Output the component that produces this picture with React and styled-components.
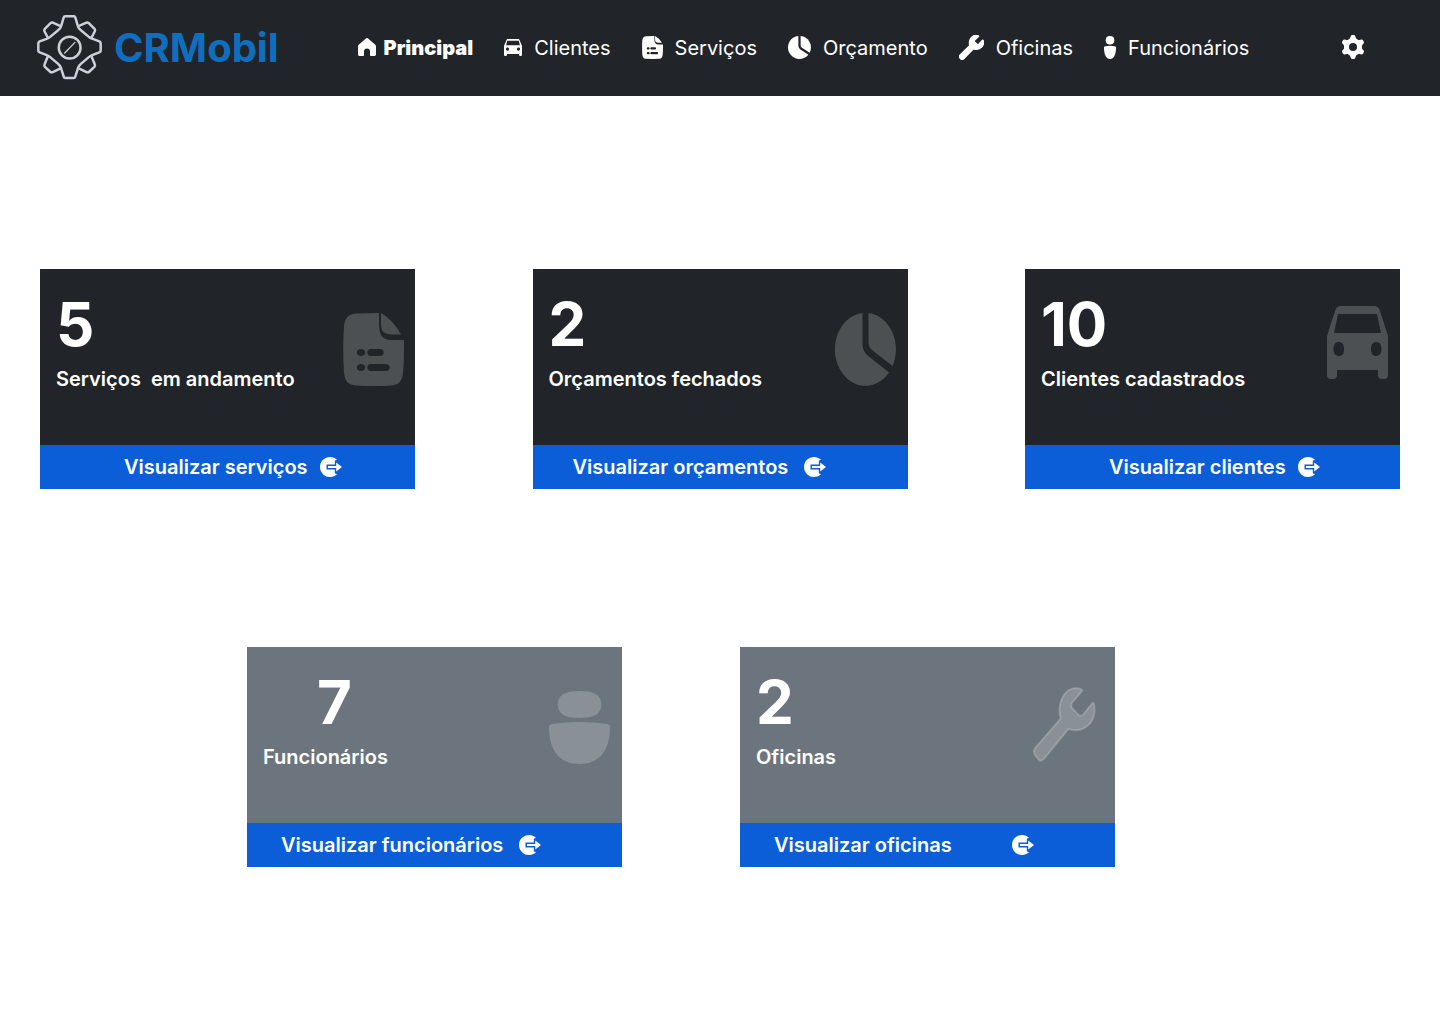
import React from "react";
import styled, { createGlobalStyle } from "styled-components";

const GlobalStyle = createGlobalStyle`
  *, *::before, *::after { box-sizing: border-box; }
  body {
    margin: 0;
    background: #ffffff;
    font-family: Inter, "Liberation Sans", sans-serif;
  }
`;

/* ---------- Icons ---------- */

const Glyph = styled.svg`
  display: block;
  flex: none;
  width: ${(p) => p.$w}px;
  height: ${(p) => p.$h}px;
  fill: currentColor;
`;

function Icon({ w, h, box, children }) {
  return (
    <Glyph $w={w} $h={h} viewBox={box} preserveAspectRatio="none" aria-hidden="true">
      {children}
    </Glyph>
  );
}

const HomeIcon = ({ w, h }) => (
  <Icon w={w} h={h} box="0 0 18 18">
    <path d="M7.9.5a1.7 1.7 0 0 1 2.2 0l7.2 6.2c.4.4.7.9.7 1.5v8.3c0 .8-.7 1.5-1.5 1.5H13c-.6 0-1-.4-1-1v-3.500a3 3 0 0 0-6 0V17c0 .6-.4 1-1 1H1.500C.7 18 0 17.300 0 16.500V8.200c0-.6.3-1.100.7-1.500z" />
  </Icon>
);

const CarIcon = ({ w, h }) => (
  <Icon w={w} h={h} box="0 0 61 73">
    <path
      fillRule="evenodd"
      d="M8 5C9 1.500 11 0 14 0H47C50 0 52 1.500 53 5L61 30V69Q61 73 57 73H55Q51 73 51 69V64H10V69Q10 73 6 73H4Q0 73 0 69V30ZM11 8L7 27H54L50 8ZM12 36C8.500 36 6.500 38 6.500 43S8.500 50 12 50S17 48 17 43S15 36 12 36ZM49 36C46 36 44 38 44 43S46 50 49 50S54.500 48 54.500 43S52.500 36 49 36Z"
    />
  </Icon>
);

const DocumentIcon = ({ w, h }) => (
  <Icon w={w} h={h} box="0 0 61 73">
    <path
      fillRule="evenodd"
      d="M36 0V12C36 22 40 27 48 27H61C61 41 61 52 60 60C59 69 55 72 48 72.500Q30 73.500 13 72.500C6 72 2 69 1 60Q-.5 36 1 13C2 4 6 1 13 .5Q24 0 36 0ZM18 36C12.500 36 12.500 43 18 43S23.500 36 18 36ZM28 36C23 36 23 43 28 43H37C42 43 42 36 37 36ZM18 51C12.500 51 12.500 58 18 58S23.500 51 18 51ZM28 51C23 51 23 58 28 58H43C48 58 48 51 43 51Z"
    />
    <path d="M38 0Q50 7 58 21.500H49C41 21.500 38 18 38 11Z" />
  </Icon>
);

const PieIcon = ({ w, h }) => (
  <Icon w={w} h={h} box="0 0 61 73">
    <path d="M27.500 0V32Q28 38 32 42L54 59.500A30.500 36.500 0 1 1 27.500 0Z" />
    <path d="M33.500 0V30Q33.500 34 37 37L57.500 53A30.500 36.500 0 0 0 33.500 0Z" />
  </Icon>
);

const WrenchIcon = ({ w, h, outline = 2 }) => (
  <Icon w={w} h={h} box="0 0 64 76">
    <path
      stroke="currentColor"
      strokeWidth={outline}
      strokeLinejoin="round"
      d="M50 4Q50 1.500 43 1C32 2 24 15 28 32L2 62Q0 65 2 69L6 74Q8 76 11 73L36 42.500C46 46 60 42 62.500 26Q63 16 60.500 16L51 28Q49 30 46.500 28.500L39.500 21Q38 18 40 15.500Z"
    />
  </Icon>
);

const PersonIcon = ({ w, h }) => (
  <Icon w={w} h={h} box="0 0 61 73">
    <path d="M30.500 0C45 0 52.300 4 52.300 13.500S45 27 30.500 27S8.700 23 8.700 13.500S16 0 30.500 0Z" />
    <path d="M3 33Q30.500 29 58 33Q61 33.500 61 36C61 60 50 73 30.500 73S0 60 0 36Q0 33.500 3 33Z" />
  </Icon>
);

const SettingsIcon = ({ w, h }) => (
  <Icon w={w} h={h} box="0 0 24 24">
    <circle cx="12" cy="12" r="6.500" fill="none" stroke="currentColor" strokeWidth="5" />
    {[0, 60, 120, 180, 240, 300].map((angle) => (
      <path
        key={angle}
        transform={`rotate(${angle} 12 12)`}
        d="M6.800 5.500Q9 4.500 9.500 2L9.800 1Q10.200 0 11.200 0H12.800Q13.800 0 14.200 1L14.500 2Q15 4.500 17.200 5.500L15 7H9Z"
      />
    ))}
  </Icon>
);

const ArrowCircleIcon = () => (
  <Icon w={22} h={20} box="0 0 22 20">
    <path d="M18 4A10 10 0 1 0 18 16L15.500 15V5Z" />
    <path
      stroke="#0b5ed7"
      strokeWidth="1.400"
      d="M7.200 8.200H15.500V4L20 3L23 10L20 17L15.500 16V11.800H7.200Z"
      fill="#0b5ed7"
    />
    <path d="M8 9H16.200V5.500L22 10L16.200 14.500V11H8Z" />
  </Icon>
);

const LogoMark = () => (
  <Icon w={65} h={65} box="50 46 197 197">
    <g fill="none" stroke="#cdd0d8" strokeWidth="7.500" strokeLinejoin="round" strokeLinecap="round">
      <path d="M135 50H162Q165 50 166 53L174 80Q176 88 183 92L208 113Q214 117 221 119L239 126Q243 128 243 132V154Q243 158 239 159L219 167Q213 169 208 173L182 195Q177 199 175 205L166 233Q165 237 161 237H136Q132 237 131 233L122 205Q120 199 115 195L89 173Q84 169 78 167L58 159Q54 158 54 154V132Q54 128 58 126L77 119Q84 117 89 113L114 92Q121 88 123 80L131 53Q132 50 135 50Z" />
      <path d="M118 78L98 69Q94 68 91 71L73 89Q71 92 73 96L83 115" />
      <path d="M179 78L200 69Q204 68 207 71L225 89Q227 92 225 96L215 115" />
      <path d="M83 171L73 195Q71 200 74 203L90 218Q93 221 98 219L118 209" />
      <path d="M215 171L225 195Q227 200 224 203L208 218Q205 221 200 219L180 209" />
      <circle cx="149" cy="145" r="33" />
      <path strokeWidth="4" d="M134 161L165 129" />
    </g>
  </Icon>
);

/* ---------- Header ---------- */

const Header = styled.header`
  display: flex;
  align-items: center;
  height: 96px;
  padding: 0 75px 0 37px;
  background: #212529;
  color: #ffffff;
`;

const Brand = styled.a`
  display: flex;
  align-items: center;
  gap: 12px;
  color: #106ebe;
  font-size: 40px;
  line-height: 48px;
  font-weight: 700;
  text-decoration: none;

  svg {
    margin-bottom: 2px;
  }
`;

const Nav = styled.nav`
  display: flex;
  align-items: center;
  gap: 31px;
  margin-left: 79px;
`;

const NavLink = styled.a`
  display: flex;
  align-items: center;
  gap: ${(p) => (p.$active ? 8 : 12)}px;
  color: inherit;
  font-size: 20px;
  line-height: 24px;
  font-weight: ${(p) => (p.$active ? 900 : 400)};
  text-decoration: none;

  svg {
    margin-bottom: 2px;
  }
`;

const SettingsButton = styled.button`
  margin: 0 0 0 auto;
  padding: 0 0 2px;
  border: 0;
  background: none;
  color: inherit;
  cursor: pointer;
`;

/* ---------- Cards ---------- */

const Dashboard = styled.main`
  display: flex;
  flex-direction: column;
  gap: 158px;
  padding: 173px 40px;
`;

const CardRow = styled.div`
  display: flex;
  justify-content: space-between;
`;

const CenteredRow = styled(CardRow)`
  justify-content: center;
  gap: 118px;
  padding-right: 78px;
`;

const Card = styled.article`
  width: 375px;
  color: #ffffff;
  background: ${(p) => (p.$muted ? "#6c757d" : "#212529")};
`;

const CardBody = styled.div`
  display: flex;
  justify-content: space-between;
  align-items: flex-start;
  height: 176px;
  padding: 20px ${(p) => p.$edge}px 0 16px;
`;

const Count = styled.p`
  margin: 0 0 8px ${(p) => p.$indent}px;
  font-size: 60px;
  line-height: 70px;
  font-weight: 700;
  font-kerning: none;
`;

const Label = styled.h2`
  margin: 0;
  font-size: 20px;
  line-height: 24px;
  font-weight: 600;
  white-space: pre;
`;

const CardIcon = styled.div`
  padding-top: ${(p) => p.$drop}px;
  color: rgba(255, 255, 255, 0.2);
`;

const CardLink = styled.a`
  display: flex;
  align-items: center;
  gap: ${(p) => p.$gap}px;
  height: 44px;
  padding-left: ${(p) => p.$inset}px;
  background: #0b5ed7;
  color: inherit;
  font-size: 20px;
  line-height: 24px;
  font-weight: 600;
  text-decoration: none;
`;

function SummaryCard({
  count, label, action, icon, muted, indent = 0, drop = 24, edge = 12, inset, gap = 12,
}) {
  return (
    <Card $muted={muted}>
      <CardBody $edge={edge}>
        <div>
          <Count $indent={indent}>{count}</Count>
          <Label>{label}</Label>
        </div>
        <CardIcon $drop={drop}>{icon}</CardIcon>
      </CardBody>
      <CardLink href="#" $inset={inset} $gap={gap}>
        {action}
        <ArrowCircleIcon />
      </CardLink>
    </Card>
  );
}

const navItems = [
  { text: "Principal", icon: <HomeIcon w={18} h={18} />, active: true },
  { text: "Clientes", icon: <CarIcon w={18} h={17} /> },
  { text: "Serviços", icon: <DocumentIcon w={21} h={23} /> },
  { text: "Orçamento", icon: <PieIcon w={23} h={23} /> },
  { text: "Oficinas", icon: <WrenchIcon w={25} h={25} outline={4} /> },
  { text: "Funcionários", icon: <PersonIcon w={12} h={23} /> },
];

export default function App() {
  return (
    <>
      <GlobalStyle />
      <Header>
        <Brand href="#">
          <LogoMark />
          CRMobil
        </Brand>
        <Nav>
          {navItems.map(({ text, icon, active }) => (
            <NavLink key={text} href="#" $active={active}>
              {icon}
              {text}
            </NavLink>
          ))}
        </Nav>
        <SettingsButton type="button" aria-label="Configurações">
          <SettingsIcon w={24} h={24} />
        </SettingsButton>
      </Header>
      <Dashboard>
        <CardRow>
          <SummaryCard
            count="5"
            label="Serviços  em andamento"
            action="Visualizar serviços"
            icon={<DocumentIcon w={61} h={73} />}
            edge={11}
            inset={84}
          />
          <SummaryCard
            count="2"
            label="Orçamentos fechados"
            action="Visualizar orçamentos"
            icon={<PieIcon w={61} h={73} />}
            inset={40}
            gap={16}
          />
          <SummaryCard
            count="10"
            label="Clientes cadastrados"
            action="Visualizar clientes"
            icon={<CarIcon w={61} h={73} />}
            drop={17}
            inset={84}
          />
        </CardRow>
        <CenteredRow>
          <SummaryCard
            muted
            count="7"
            label="Funcionários"
            action="Visualizar funcionários"
            icon={<PersonIcon w={61} h={73} />}
            indent={54}
            inset={34}
            gap={16}
          />
          <SummaryCard
            muted
            count="2"
            label="Oficinas"
            action="Visualizar oficinas"
            icon={<WrenchIcon w={63} h={75} />}
            drop={20}
            edge={19}
            inset={34}
            gap={60}
          />
        </CenteredRow>
      </Dashboard>
    </>
  );
}
